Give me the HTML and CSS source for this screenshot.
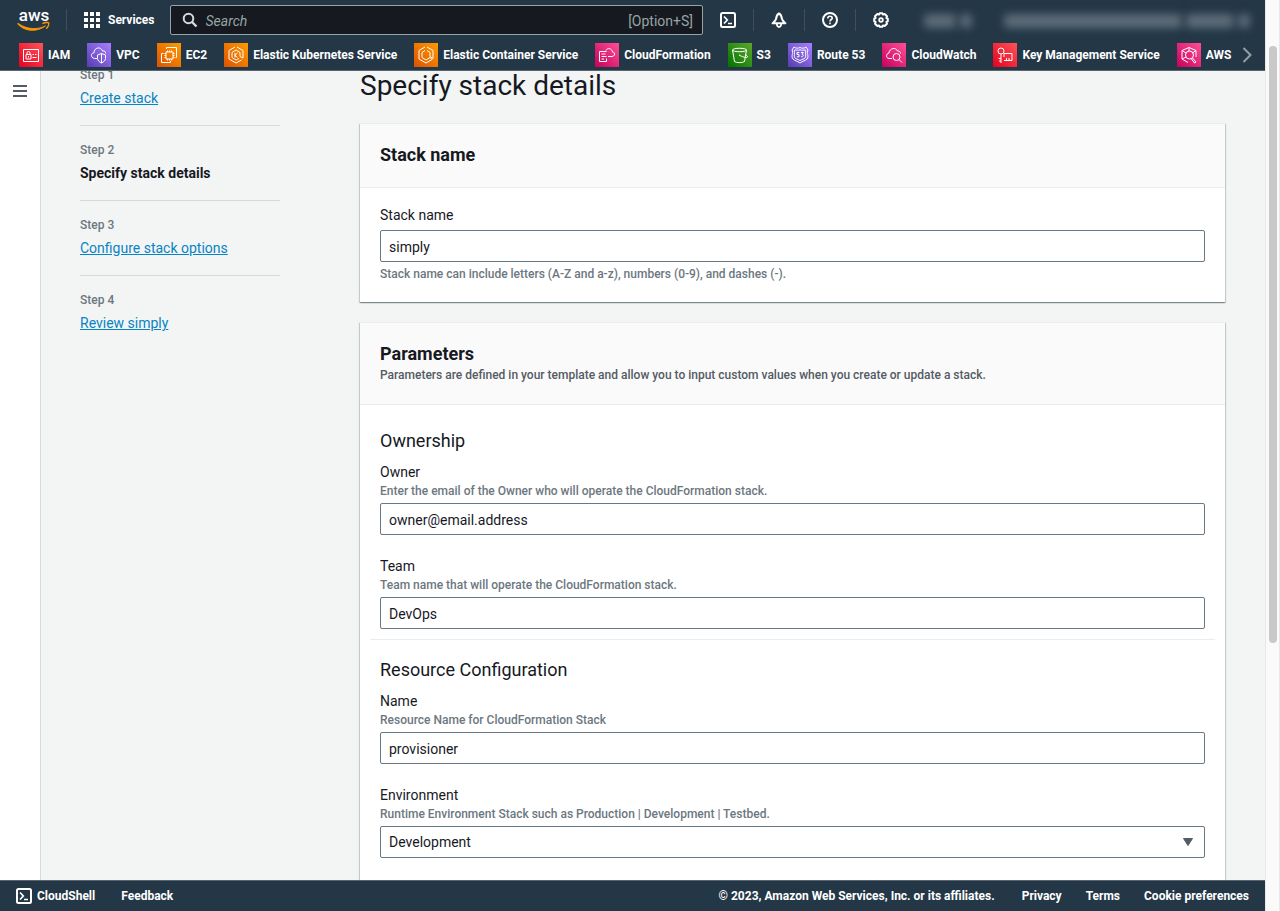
FILE: index.html
```html
<!DOCTYPE html>
<html lang="en">
<head>
<meta charset="utf-8">
<meta name="viewport" content="width=device-width, initial-scale=1">
<title>Specify stack details</title>
<link rel="stylesheet" href="styles.css">
</head>
<body>
<svg class="defs" aria-hidden="true">
  <defs>
    <linearGradient id="red" x1="0" y1="1" x2="1" y2="0"><stop offset="0" stop-color="#e5001f"/><stop offset="1" stop-color="#ff5458"/></linearGradient>
    <linearGradient id="purple" x1="0" y1="1" x2="1" y2="0"><stop offset="0" stop-color="#573cb4"/><stop offset="1" stop-color="#a97fff"/></linearGradient>
    <linearGradient id="orange" x1="0" y1="1" x2="1" y2="0"><stop offset="0" stop-color="#de5200"/><stop offset="1" stop-color="#ff9c00"/></linearGradient>
    <linearGradient id="pink" x1="0" y1="1" x2="1" y2="0"><stop offset="0" stop-color="#c8005c"/><stop offset="1" stop-color="#ff4f97"/></linearGradient>
    <linearGradient id="green" x1="0" y1="1" x2="1" y2="0"><stop offset="0" stop-color="#007300"/><stop offset="1" stop-color="#5ea82b"/></linearGradient>
  </defs>
</svg>
<div class="window">
  <div class="app">
    <header class="topbar">
      <div class="topbar-main">
        <a class="logo" href="#" aria-label="AWS home">
          <svg width="34" height="24" viewBox="0 0 34 24">
            <text class="logo-text" x="17" y="13" text-anchor="middle">aws</text>
            <path d="M1 15.300c9.500 6.700 20 6.300 27.500 2.600-8 6-20 6.500-27.900-1.900z" fill="#ff9900" stroke="#ff9900" stroke-width=".8" stroke-linejoin="round"/>
            <path d="M26 15.400c2-1 5-1.200 5.600-.5.500 1.200-.6 4-2 5.400" fill="none" stroke="#ff9900" stroke-width="1.500" stroke-linecap="round"/>
          </svg>
        </a>
        <span class="divider"></span>
        <button class="services" type="button">
          <svg width="16" height="16" viewBox="0 0 16 16" fill="#fff"><path d="M0 0h4v4H0zM6 0h4v4H6zM12 0h4v4h-4zM0 6h4v4H0zM6 6h4v4H6zM12 6h4v4h-4zM0 12h4v4H0zM6 12h4v4H6zM12 12h4v4h-4z"/></svg>
          Services
        </button>
        <form class="search" role="search">
          <svg width="16" height="16" viewBox="0 0 16 16" fill="none" stroke="#d5dbdb" stroke-width="2"><circle cx="6.500" cy="6.500" r="4.800"/><path d="M10 10l4.500 4.500" stroke-width="2.400"/></svg>
          <input class="search-input" type="search" placeholder="Search" aria-label="Search">
          <span class="shortcut">[Option+S]</span>
        </form>
        <div class="tools">
          <button class="tool" type="button" aria-label="CloudShell"><svg width="16" height="16" viewBox="0 0 16 16" fill="none" stroke="#fff" stroke-width="2"><rect x="1" y="1" width="14" height="14" rx="1.500"/><path d="M4 4.500L7.300 8 4 11.500M8 11.500h4" stroke-width="1.700"/></svg></button>
          <span class="divider"></span>
          <button class="tool" type="button" aria-label="Notifications"><svg width="16" height="16" viewBox="0 0 16 16" fill="none" stroke="#fff" stroke-width="2" stroke-linejoin="round"><path d="M8 1.500C6.300 2.200 5.500 4 5.100 6.600 4.800 8.500 3.300 9.500 1.600 11.300h12.800C12.700 9.500 11.200 8.500 10.900 6.600 10.500 4 9.700 2.200 8 1.500z"/><path d="M5.800 12c.2 2 1 3 2.200 3s2-1 2.200-3" stroke-width="1.800"/></svg></button>
          <span class="divider"></span>
          <button class="tool" type="button" aria-label="Help"><svg width="16" height="16" viewBox="0 0 16 16" fill="none" stroke="#fff" stroke-width="2"><circle cx="8" cy="8" r="7"/><path d="M5.800 6.500C5.800 5 6.700 4.300 8 4.300s2.200.8 2.200 1.900C10.200 7.500 8 7.600 8 9.500M8 10.600v1.700" stroke-width="1.600"/></svg></button>
          <span class="divider"></span>
          <button class="tool" type="button" aria-label="Settings"><svg width="16" height="16" viewBox="0 0 16 16" fill="none" stroke="#fff" stroke-linejoin="round"><path d="M6.700 1.200h2.600l.7 1.400 1.700-.6 2.300 2.300-.6 1.700 1.400.7v2.600l-1.400.7.6 1.700-2.300 2.300-1.700-.6-.7 1.400H6.700L6 13.400l-1.700.6L2 11.700l.6-1.700-1.400-.7V6.700L2.600 6 2 4.300 4.300 2l1.700.6z" stroke-width="2"/><circle cx="8" cy="8" r="1.800" stroke-width="1.800"/></svg></button>
        </div>
        <div class="account">
          <button class="masked" type="button" aria-label="Region"><span class="smudge smudge-region"></span><span class="smudge smudge-caret"></span></button>
          <button class="masked" type="button" aria-label="Account"><span class="smudge smudge-user"></span><span class="smudge smudge-alias"></span><span class="smudge smudge-caret"></span></button>
        </div>
      </div>
      <nav class="favorites" aria-label="Favorites">
        <div class="favorites-list">
          <a class="favorite" href="#"><svg class="service" viewBox="0 0 24 24"><rect width="24" height="24" fill="url(#red)"/><path d="M4.500 6.500h15v12h-15zM7 11.500h5v4.500H7zM8 11.500V10a1.500 1.500 0 0 1 3 0v1.500M9.500 13v1.500M13.500 11.500h1.500M16 11.500h1.500M13.500 14.500h4"/></svg>IAM</a>
          <a class="favorite" href="#"><svg class="service" viewBox="0 0 24 24"><rect width="24" height="24" fill="url(#purple)"/><path d="M10 15.500H7.500C3.500 15 3.500 10 7 9.800 7 4.500 14 3 15.500 8c2.300-.6 3.300 1 3 2.500M14.500 10.500l4 1.500v3.500c0 2-2 3.500-4 4.500-2-1-4-2.500-4-4.500V12zM14.500 10.500V20"/></svg>VPC</a>
          <a class="favorite" href="#"><svg class="service" viewBox="0 0 24 24"><rect width="24" height="24" fill="url(#orange)"/><path d="M9 9h7v7H9zM10.500 9V7.500M12.500 9V7.500M14.500 9V7.500M10.500 17.500V16M12.500 17.500V16M14.500 17.500V16M9 10.500H7.500M9 12.500H7.500M9 14.500H7.500M17.500 10.500H16M17.500 12.500H16M17.500 14.500H16M9.500 6V4.500h10v10H18.500M6.500 10.500h-2v9h9v-1.500"/></svg>EC2</a>
          <a class="favorite" href="#"><svg class="service" viewBox="0 0 24 24"><rect width="24" height="24" fill="url(#orange)"/><path d="M11 4L5 7.500v8.500l7 4 5.500-3M13 4l6 3.500v7.500l-3-1.500V9.500L12 7 8 9.500v5l4 2.500 3-1.500M11 10v4.500M13.500 10L11 12.300l2.500 2.200"/></svg>Elastic Kubernetes Service</a>
          <a class="favorite" href="#"><svg class="service" viewBox="0 0 24 24"><rect width="24" height="24" fill="url(#orange)"/><path d="M11 4L5 7.500v8.500l7 4 6-3.500-2-2-4 2.500-4-2.500v-5L11 7.500M13 4l6 3.500v8l-3-2V9.500L13 7.500"/></svg>Elastic Container Service</a>
          <a class="favorite" href="#"><svg class="service" viewBox="0 0 24 24"><rect width="24" height="24" fill="url(#pink)"/><path d="M11.500 8.500h-7v10h7v-3M6.500 11h4M6.500 13.500h5M6.500 16H9M13 13.500h4c3.500-.3 3.300-4.500.5-4.500C17 5 12 4.500 11 7.500"/></svg>CloudFormation</a>
          <a class="favorite" href="#"><svg class="service" viewBox="0 0 24 24"><rect width="24" height="24" fill="url(#green)"/><path d="M4.500 7c0-2.300 14-2.300 14 0s-14 2.300-14 0zM4.500 7l2 11.500c1.500 1.500 8.500 1.500 10 0L18.500 7M11 12c2.500 1.500 8 3.500 8.500 2 .2-1-1.500-2-2.500-2.500M11 12h.5"/></svg>S3</a>
          <a class="favorite" href="#"><svg class="service" viewBox="0 0 24 24"><rect width="24" height="24" fill="url(#purple)"/><path d="M12 4.500c2 1 4 1 6-.5l2 3c-2 3 1.500 6-1 9-1.500 1.800-4.500 2-7 4-2.500-2-5.500-2.200-7-4-2.500-3 1-6-1-9l2-3c2 1.500 4 1.500 6 .5zM12 6.800c1.500.6 3.500.6 5.200 0l.6 1c-1 2.500.8 5-.6 7-1 1.400-3.200 1.400-5.200 2.700-2-1.300-4.200-1.300-5.200-2.700-1.400-2 .4-4.500-.6-7l.6-1c1.700.6 3.700.6 5.200 0zM11.300 9.500H9v2h2v2.300H8.800M13 9.500h2.300l-1.200 1.800c1.800.2 1.500 2.500-.9 2.500"/></svg>Route 53</a>
          <a class="favorite" href="#"><svg class="service" viewBox="0 0 24 24"><rect width="24" height="24" fill="url(#pink)"/><path d="M10 15.500H7C3.500 15 4 10.500 7 10c.500-5 7-6 8.500-2 2-.3 3 1 3 2.500"/><circle cx="14.500" cy="14" r="3.500"/><path d="M17 16.500l3 3"/></svg>CloudWatch</a>
          <a class="favorite" href="#"><svg class="service" viewBox="0 0 24 24"><rect width="24" height="24" fill="url(#red)"/><circle cx="8" cy="8" r="3"/><path d="M8 11v9M8 15.500H5.500M8 18H6M11 14v-3.500h8v7h-8M13.500 17v-2M16 17v-2"/></svg>Key Management Service</a>
          <a class="favorite" href="#"><svg class="service" viewBox="0 0 24 24"><rect width="24" height="24" fill="url(#pink)"/><path d="M11 19.500l-6-3.500V7.500l7-3 7 3V14M5 7.500l4 2.500M19 7.500L15.500 10M12 4.500V8M5 16l4-2"/><circle cx="12.500" cy="12" r="4"/><path d="M15.500 15l3.500 4-1.500 1-3-4"/></svg>AWS</a>
        </div>
        <button class="scroll-next" type="button" aria-label="Scroll favorites"><svg width="10" height="16" viewBox="0 0 10 16" fill="none" stroke="#95a0a6" stroke-width="2"><path d="M1.500 1L8.500 8l-7 7"/></svg></button>
      </nav>
    </header>

    <div class="body">
      <aside class="rail">
        <button class="menu" type="button" aria-label="Open navigation"><svg width="14" height="12" viewBox="0 0 14 12" fill="#545b64"><path d="M0 0h14v2H0zM0 5h14v2H0zM0 10h14v2H0z"/></svg></button>
      </aside>
      <div class="scroller">
        <ol class="steps">
          <li class="step"><span class="step-count">Step 1</span><a class="step-name" href="#">Create stack</a></li>
          <li class="step"><span class="step-count">Step 2</span><strong class="step-name">Specify stack details</strong></li>
          <li class="step"><span class="step-count">Step 3</span><a class="step-name" href="#">Configure stack options</a></li>
          <li class="step"><span class="step-count">Step 4</span><a class="step-name" href="#">Review simply</a></li>
        </ol>
        <main class="content">
          <h1>Specify stack details</h1>
          <section class="card">
            <div class="card-head"><h2>Stack name</h2></div>
            <div class="card-body single">
              <div class="field">
                <label for="stack-name">Stack name</label>
                <input class="control" id="stack-name" type="text" value="simply" aria-describedby="stack-hint">
                <p class="hint below" id="stack-hint">Stack name can include letters (A-Z and a-z), numbers (0-9), and dashes (-).</p>
              </div>
            </div>
          </section>
          <section class="card">
            <div class="card-head">
              <h2>Parameters</h2>
              <p class="description">Parameters are defined in your template and allow you to input custom values when you create or update a stack.</p>
            </div>
            <div class="card-body groups">
              <div class="group">
                <h3>Ownership</h3>
                <div class="fields">
                  <div class="field">
                    <label for="owner">Owner</label>
                    <p class="hint" id="owner-hint">Enter the email of the Owner who will operate the CloudFormation stack.</p>
                    <input class="control" id="owner" type="text" value="owner@email.address" aria-describedby="owner-hint">
                  </div>
                  <div class="field">
                    <label for="team">Team</label>
                    <p class="hint" id="team-hint">Team name that will operate the CloudFormation stack.</p>
                    <input class="control" id="team" type="text" value="DevOps" aria-describedby="team-hint">
                  </div>
                </div>
              </div>
              <div class="group">
                <h3>Resource Configuration</h3>
                <div class="fields">
                  <div class="field">
                    <label for="name">Name</label>
                    <p class="hint" id="name-hint">Resource Name for CloudFormation Stack</p>
                    <input class="control" id="name" type="text" value="provisioner" aria-describedby="name-hint">
                  </div>
                  <div class="field">
                    <label for="environment">Environment</label>
                    <p class="hint" id="environment-hint">Runtime Environment Stack such as Production | Development | Testbed.</p>
                    <div class="select">
                      <select class="control" id="environment" aria-describedby="environment-hint"><option>Development</option><option>Production</option><option>Testbed</option></select>
                      <svg class="select-arrow" width="10" height="8" viewBox="0 0 10 8"><path d="M.5.500h9L5 7.500z" fill="#545b64" stroke="#545b64" stroke-linejoin="round"/></svg>
                    </div>
                  </div>
                </div>
              </div>
            </div>
          </section>
        </main>
      </div>
    </div>

    <footer class="footer">
      <button class="footer-item" type="button"><svg width="16" height="16" viewBox="0 0 16 16" fill="none" stroke="#fff" stroke-width="2"><rect x="1" y="1" width="14" height="14" rx="1.500"/><path d="M4 4.500L7.300 8 4 11.500M8 11.500h4" stroke-width="1.700"/></svg>CloudShell</button>
      <button class="footer-item" type="button">Feedback</button>
      <div class="legal">
        <span class="copyright">© 2023, Amazon Web Services, Inc. or its affiliates.</span>
        <a class="footer-item" href="#">Privacy</a>
        <a class="footer-item" href="#">Terms</a>
        <a class="footer-item" href="#">Cookie preferences</a>
      </div>
    </footer>
  </div>
  <div class="scrollbar"><div class="thumb"></div></div>
</div>
</body>
</html>
```

FILE: styles.css
```css
* { box-sizing: border-box; }

body {
  margin: 0;
  background: #f3f5f5;
  color: #16191f;
  font: 14px/22px Roboto, "Noto Sans", sans-serif;
}

h1, h2, h3, p, ol { margin: 0; padding: 0; }
button, input, select { font: inherit; color: inherit; }
button { padding: 0; border: 0; background: none; }
svg { display: block; flex: none; }
.defs { position: absolute; width: 0; height: 0; }

.window { display: flex; height: 100vh; }
.app { display: flex; flex: 1; flex-direction: column; min-width: 0; }

/* Top navigation */
.topbar {
  border-bottom: 1px solid #596573;
  background: #233747;
  color: #fff;
  font-size: 12px;
  font-weight: 700;
}
.topbar-main { display: flex; align-items: center; height: 40px; padding-left: 17px; }
.logo { margin-right: 15px; }
.logo svg { overflow: visible; }
.logo-text { fill: #fff; font: 500 17px Roboto, sans-serif; }
.divider { width: 1px; height: 22px; background: #414f5c; }
.services { display: flex; align-items: center; gap: 8px; margin: 0 15px 0 17px; }
.search {
  display: flex;
  flex: 1;
  align-items: center;
  gap: 8px;
  height: 30px;
  padding: 0 9px 0 11px;
  border: 1px solid #95a5a6;
  border-radius: 2px;
  background: #16191f;
  color: #95a5a6;
  font-size: 14px;
  font-weight: 400;
}
.search-input {
  flex: 1;
  min-width: 0;
  padding: 1px 0 0;
  border: 0;
  outline: 0;
  background: none;
}
.search-input::placeholder { color: #95a5a6; font-style: italic; opacity: 1; }
.shortcut { padding-top: 1px; }
.tools { display: flex; align-items: center; gap: 17px; padding: 0 35px 0 17px; }
.account { display: flex; align-items: center; gap: 32px; padding-right: 15px; }
.masked { display: flex; align-items: center; gap: 4px; height: 24px; padding-top: 2px; }
.smudge { height: 14px; border-radius: 4px; background: #5d6c78; filter: blur(4px); }
.smudge-region { width: 32px; }
.smudge-caret { width: 12px; }
.smudge-user { width: 178px; }
.smudge-alias { width: 48px; }

.favorites { display: flex; align-items: center; height: 30px; padding: 0 13px 0 19px; }
.favorites-list { display: flex; flex: 1; gap: 17px; min-width: 0; overflow: hidden; }
.favorite {
  display: flex;
  flex: none;
  align-items: center;
  gap: 5px;
  color: #fff;
  text-decoration: none;
  white-space: nowrap;
}
.service { width: 24px; height: 24px; fill: none; stroke: #fff; stroke-width: 1; }
.service rect { stroke: none; }
.scroll-next { margin-left: 8px; }

/* Page body */
.body { display: flex; flex: 1; min-height: 0; }
.rail { width: 41px; border-right: 1px solid #d5dbdb; background: #fff; }
.menu { display: block; margin: 14px 13px; }
.scroller {
  display: grid;
  flex: 1;
  grid-template-columns: 200px 1fr;
  gap: 80px;
  padding: 0 40px 0 39px;
  overflow: hidden;
}
.steps, .content { margin-top: -4px; }
.steps { list-style: none; }
.step { padding-bottom: 16px; margin-bottom: 16px; border-bottom: 1px solid #d5dbdb; }
.step:last-child { border-bottom: 0; }
.step-count { display: block; color: #6c7780; font-size: 12px; font-weight: 500; line-height: 16px; }
.step-name { display: block; margin-top: 4px; }
a.step-name { color: #0784c3; text-decoration: underline; }

.content { min-width: 0; }
h1 { padding-top: 1px; margin-bottom: 19px; font-size: 28px; font-weight: 400; line-height: 36px; }
.card {
  margin-bottom: 20px;
  border-top: 1px solid #eaeded;
  background: #fff;
  box-shadow: 0 1px 1px rgba(0, 28, 36, .3), 1px 1px 1px rgba(0, 28, 36, .15), -1px 1px 1px rgba(0, 28, 36, .15);
}
.card-head { padding: 19px 20px 21px; border-bottom: 1px solid #eaeded; background: #fafafa; }
h2 { font-size: 18px; font-weight: 700; line-height: 23px; }
.description { margin-top: 2px; color: #545b64; font-size: 12px; font-weight: 500; line-height: 16px; }
.single { padding: 16px 20px 20px; }
.groups { padding: 0 10px 20px; }
.group { padding: 19px 10px 10px; border-bottom: 1px solid #eaeded; }
.group:first-child { padding-top: 25px; }
.group:last-child { border-bottom: 0; }
h3 { margin-bottom: 9px; font-size: 18px; font-weight: 400; line-height: 22px; }
.fields { display: grid; gap: 20px; }
.field label { display: block; }
.hint { margin-bottom: 4px; color: #6c7780; font-size: 12px; font-weight: 500; line-height: 16px; }
.hint.below { margin: 4px 0 0; }
.control {
  display: block;
  width: 100%;
  height: 32px;
  padding: 0 8px;
  border: 1px solid #687885;
  border-radius: 2px;
  background: #fff;
}
input.control { padding-top: 2px; }
.single .control { margin-top: 4px; }
.select { position: relative; }
.select .control { appearance: none; }
.select-arrow { position: absolute; top: 12px; right: 12px; pointer-events: none; }

/* Footer */
.footer {
  display: flex;
  align-items: center;
  gap: 26px;
  height: 31px;
  padding: 0 16px;
  border-top: 1px solid #596573;
  background: #233747;
  color: #fff;
  font-size: 12px;
  font-weight: 700;
}
.footer-item { display: flex; align-items: center; gap: 5px; color: #fff; text-decoration: none; }
.legal { display: flex; gap: 24px; margin-left: auto; }
.copyright { margin-right: 3px; }

/* Scroll indicator */
.scrollbar { width: 15px; padding: 46px 2px 0 3px; border: 1px solid #e8e8e8; border-width: 0 1px; background: #fafafa; }
.thumb { width: 8px; height: 69%; border-radius: 4px; background: #c9c9c9; }
```
